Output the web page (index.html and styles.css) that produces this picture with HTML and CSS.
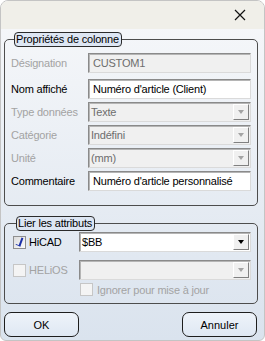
FILE: index.html
```html
<!DOCTYPE html>
<html lang="fr">
<head>
    <meta charset="UTF-8">
    <meta name="viewport" content="width=device-width, initial-scale=1.0">
    <title>Propriétés de colonne</title>
    <link rel="stylesheet" href="styles.css">
</head>
<body>
    <div class="window">
        <div class="titlebar">
            <svg class="close" width="12" height="12" viewBox="0 0 12 12">
                <path d="M1 1 L11 11 M11 1 L1 11" stroke="#111" stroke-width="1.2" fill="none"/>
            </svg>
        </div>
        <div class="content">
            <fieldset class="group">
                <legend>Propriétés de colonne</legend>
                <div class="form">
                    <label class="off">Désignation</label>
                    <div class="field off">CUSTOM1</div>

                    <label>Nom affiché</label>
                    <div class="field">Numéro d'article (Client)</div>

                    <label class="off">Type données</label>
                    <div class="field combo off">Texte<span class="arrow"></span></div>

                    <label class="off">Catégorie</label>
                    <div class="field combo off">Indéfini<span class="arrow"></span></div>

                    <label class="off">Unité</label>
                    <div class="field combo off">(mm)<span class="arrow"></span></div>

                    <label>Commentaire</label>
                    <div class="field">Numéro d'article personnalisé</div>
                </div>
            </fieldset>

            <fieldset class="group links">
                <legend>Lier les attributs</legend>
                <div class="link-row">
                    <span class="check on"></span>
                    <span class="check-label">HiCAD</span>
                    <div class="field combo">$BB<span class="arrow"></span></div>
                </div>
                <div class="link-row">
                    <span class="check off"></span>
                    <span class="check-label off">HELiOS</span>
                    <div class="field combo off"><span class="arrow"></span></div>
                </div>
                <div class="ignore-row">
                    <span class="check off"></span>
                    <span class="check-label off">Ignorer pour mise à jour</span>
                </div>
            </fieldset>

            <div class="actions">
                <button>OK</button>
                <button>Annuler</button>
            </div>
        </div>
    </div>
</body>
</html>
```

FILE: styles.css
```css
* {
    margin: 0;
    padding: 0;
    box-sizing: border-box;
}
body {
    background: #fff;
    font-family: 'Liberation Sans', Arial, sans-serif;
    font-size: 11px;
    letter-spacing: -0.2px;
    color: #000;
}
.window {
    width: 265px;
    height: 341px;
    border: 1px solid #c4c4c4;
    border-radius: 8px 8px 6px 6px;
    overflow: hidden;
    background: linear-gradient(#f7f8fa, #dae3ee);
    display: flex;
    flex-direction: column;
}
.titlebar {
    height: 28px;
    background: #f0efe9;
    display: flex;
    justify-content: flex-end;
    align-items: center;
    padding-right: 18px;
    flex-shrink: 0;
}
.content {
    flex: 1;
    padding: 3px 6px 3px 3px;
    display: flex;
    flex-direction: column;
}
.group {
    border: 1px solid #4d4d4d;
    border-radius: 5px;
    padding: 6px 6px 14px 6px;
}
.group legend {
    margin-left: 3px;
    padding: 1px 2px 1px 1px;
    background: #dde6f3;
    border: 1px solid #2b2b2b;
    border-radius: 4px;
    line-height: 11px;
}
.form {
    display: grid;
    grid-template-columns: 77px 1fr;
    align-items: center;
    row-gap: 3px;
}
.form label:nth-of-type(2) {
    margin-top: 3px;
}
.form .field:nth-of-type(2) {
    margin-top: 3px;
}
label.off,
.check-label.off {
    color: #a3a3a3;
}
.field {
    height: 20px;
    border: 1px solid;
    border-color: #8a8a8a #dadada #dadada #8a8a8a;
    box-shadow: inset 1px 1px 0 #b5b5b5;
    background: #fff;
    padding: 0 4px;
    line-height: 18px;
    white-space: nowrap;
    overflow: hidden;
    position: relative;
}
.field.off {
    background: #f0f0f0;
    color: #6d6d6d;
}
.combo {
    padding-left: 2px;
}
.arrow {
    position: absolute;
    right: 1px;
    top: 1px;
    width: 16px;
    height: 16px;
    background: #f0f0f0;
    border: 1px solid;
    border-color: #fff #808080 #808080 #fff;
}
.arrow::after {
    content: "";
    position: absolute;
    left: 4px;
    top: 5px;
    border-left: 3.5px solid transparent;
    border-right: 3.5px solid transparent;
    border-top: 4px solid #000;
}
.off .arrow::after {
    border-top-color: #a3a3a3;
}
.links {
    margin-top: 10px;
    padding: 1px 6px 7px 8px;
}
.link-row {
    display: flex;
    align-items: center;
    height: 20px;
    margin-bottom: 8px;
}
.link-row .field {
    flex: 1;
}
.check {
    width: 13px;
    height: 13px;
    border: 1px solid #8f8f8f;
    background: linear-gradient(135deg, #dcdcdc, #fafafa);
    position: relative;
    flex-shrink: 0;
}
.check.on::after {
    content: "";
    position: absolute;
    left: 3px;
    top: 0px;
    width: 3px;
    height: 8px;
    border-right: 2px solid #1a2fa8;
    border-bottom: 1px solid #1a2fa8;
    transform: rotate(20deg);
}
.check.off {
    border-color: #c6c6c6;
    background: #f4f4f4;
}
.check-label {
    margin-left: 3px;
    width: 50px;
}
.ignore-row {
    display: flex;
    align-items: center;
    margin-left: 67px;
    margin-top: -5px;
}
.ignore-row .check-label {
    width: auto;
    margin-left: 4px;
}
.actions {
    display: flex;
    justify-content: space-between;
    margin-top: auto;
    padding-right: 1px;
}
.actions button {
    width: 75px;
    height: 25px;
    border: 1px solid #1e1e1e;
    border-radius: 7px;
    background: linear-gradient(#eef3fa, #dfe8f3);
    font-family: inherit;
    font-size: 11px;
    color: #000;
}
```
